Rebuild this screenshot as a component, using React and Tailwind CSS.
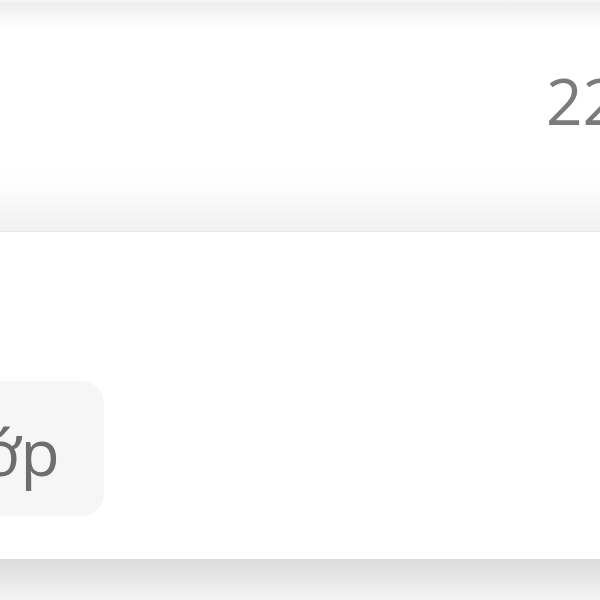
export default function App() {
  return (
    <div
      className="w-[600px] h-[600px] overflow-hidden bg-white flex flex-col"
      style={{ fontFamily: '"Open Sans", "Noto Sans", sans-serif' }}
    >
      <div className="h-[28px] shrink-0 bg-[linear-gradient(to_bottom,#f6f6f6_0%,#ededed_12%,#f7f7f7_55%,#ffffff_100%)]" />
      <div className="h-[204px] shrink-0 border-b border-[#e9e9e9] bg-[linear-gradient(to_bottom,#ffffff_0%,#ffffff_70%,#fcfcfc_80%,#f0f0f0_100%)] overflow-hidden">
        <div className="mt-[41px] ml-[546px] whitespace-nowrap text-[64px] leading-none text-[#7b7b7b]">
          22:00
        </div>
      </div>
      <div className="h-[327px] shrink-0 bg-white overflow-hidden">
        <div className="mt-[149px] ml-[-92px] inline-flex rounded-[22px] bg-[#f6f6f6] pl-[40px] pr-[44px] pt-[39px] pb-[32px]">
          <span className="whitespace-nowrap text-[64px] leading-none text-[#6e6e6e]">Lớp</span>
        </div>
      </div>
      <div className="flex-1 bg-[linear-gradient(to_bottom,#dcdcdc_0%,#e8e8e8_50%,#f4f4f4_100%)]" />
    </div>
  );
}
